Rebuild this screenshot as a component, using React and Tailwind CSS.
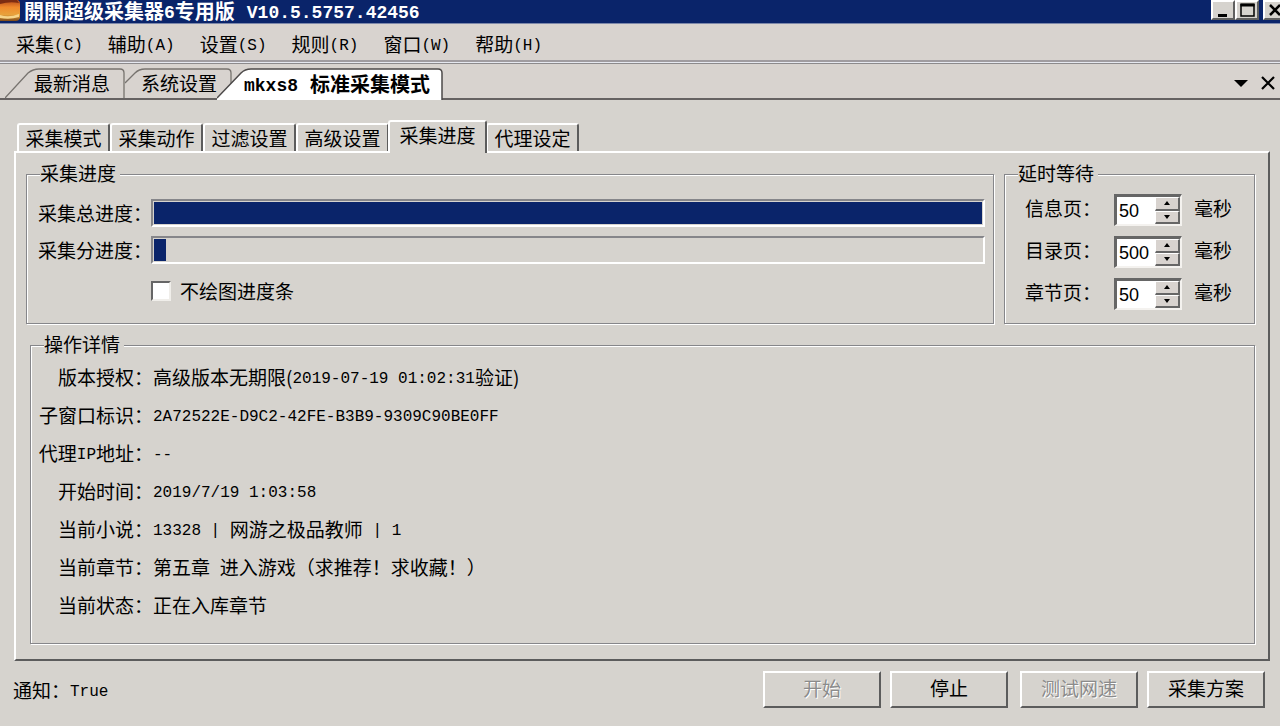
import React, { useState } from "react";

const menus = [
  ["采集", "C"],
  ["辅助", "A"],
  ["设置", "S"],
  ["规则", "R"],
  ["窗口", "W"],
  ["帮助", "H"],
];

const panelTabs = ["采集模式", "采集动作", "过滤设置", "高级设置", "采集进度", "代理设定"];

const delays = [
  { id: "info", label: "信息页：", value: 50 },
  { id: "list", label: "目录页：", value: 500 },
  { id: "chapter", label: "章节页：", value: 50 },
];

const Latin = ({ children }) => (
  <span className="font-['Liberation_Mono',monospace] text-[16px] align-[2px] leading-none">{children}</span>
);

const details = [
  ["版本授权：", <>高级版本无期限(<Latin>2019-07-19 01:02:31</Latin>验证)</>],
  ["子窗口标识：", <Latin>2A72522E-D9C2-42FE-B3B9-9309C90BE0FF</Latin>],
  [<>代理<Latin>IP</Latin>地址：</>, <Latin>--</Latin>],
  ["开始时间：", <Latin>2019/7/19 1:03:58</Latin>],
  ["当前小说：", <><Latin>13328 | </Latin>网游之极品教师<Latin> | 1</Latin></>],
  ["当前章节：", <>第五章<Latin> </Latin>进入游戏（求推荐！求收藏！）</>],
  ["当前状态：", "正在入库章节"],
];

const WindowButton = ({ label, children }) => (
  <button
    aria-label={label}
    className="w-[24px] h-[20px] flex items-center justify-center bg-[#d6d3ce] border-2 border-t-white border-l-white border-r-[#606060] border-b-[#606060]"
  >
    <svg width="18" height="16" viewBox="0 0 18 16" className="shrink-0" fill="none" stroke="#000">
      {children}
    </svg>
  </button>
);

const TitleBar = () => (
  <header className="h-[24px] flex items-start bg-[#0a246a] border-b border-[#7d88aa] overflow-x-clip">
    <svg width="20" height="21" viewBox="0 0 20 21" className="shrink-0">
      <defs>
        <linearGradient id="book" x1="0" y1="0" x2="0" y2="1">
          <stop offset="0" stopColor="#b5481b" />
          <stop offset="0.35" stopColor="#f08a2c" />
          <stop offset="0.7" stopColor="#e8a23c" />
          <stop offset="1" stopColor="#7c4a1a" />
        </linearGradient>
      </defs>
      <path d="M0 0H18Q20 1 20 4V18Q19 21 16 21H0Z" fill="url(#book)" />
      <path d="M0 15Q9 18 19 14V17Q10 20 0 18Z" fill="#f6d489" />
      <path d="M0 0H17L19 3Q10 1 0 4Z" fill="#7d2c12" />
    </svg>
    <h1 className="flex-1 ml-1 text-white text-[20px] leading-[21px] font-bold whitespace-nowrap">
      開開超级采集器<span className="font-['Liberation_Mono',monospace] text-[18px] leading-none align-[1px]">6</span>专用版
      <span className="font-['Liberation_Mono',monospace] text-[18px] leading-none align-[1px] ml-3">V10.5.5757.42456</span>
    </h1>
    <div className="flex -mr-[7px]">
      <WindowButton label="最小化">
        <path d="M4 13.5H13" strokeWidth="3" />
      </WindowButton>
      <WindowButton label="最大化">
        <path d="M3 2.5H16V14H3Z" strokeWidth="1.5" />
        <path d="M2.5 3H16.5" strokeWidth="3" />
      </WindowButton>
      <div className="w-1" />
      <WindowButton label="关闭">
        <path d="M4 3L14 13M14 3L4 13" strokeWidth="2.5" />
      </WindowButton>
    </div>
  </header>
);

const MenuBar = () => (
  <nav className="h-[36px] flex items-center gap-[25px] pt-[4px] pl-[16px] bg-[#d8d3cf]">
    {menus.map(([name, key]) => (
      <button key={key} className="whitespace-nowrap">
        {name}
        <Latin>({key})</Latin>
      </button>
    ))}
  </nav>
);

const DocumentTabs = () => (
  <div className="h-[36px] flex items-end bg-[#d8d3cf] border-b-2 border-[#666262] pl-[5px]">
    <button className="relative w-[120px] h-[30px] pl-[14px] leading-[28px]">
      <svg className="absolute inset-0" width="120" height="30" fill="none" stroke="#77736f" strokeWidth="1.3">
        <path d="M0 30L23 5Q28 1 34 1H115Q119 1 119 5V30" />
      </svg>
      <span className="relative">最新消息</span>
    </button>
    <button className="relative w-[107px] h-[30px] pl-[1px] leading-[28px]">
      <svg className="absolute inset-0" width="107" height="30" fill="none" stroke="#77736f" strokeWidth="1.3">
        <path d="M0 15L10 5Q14 1 20 1H102Q106 1 106 5V30" />
      </svg>
      <span className="relative">系统设置</span>
    </button>
    <button className="relative w-[226px] h-[32px] -ml-[15px] -mb-[2px] pl-[14px] leading-[28px] font-bold whitespace-nowrap">
      <svg className="absolute inset-0" width="226" height="32">
        <path d="M0 32V30L24 5Q28 1 34 1H221Q225 1 225 5V32Z" fill="#fff" />
        <path d="M0 30L24 5Q28 1 34 1H221Q225 1 225 5V32" fill="none" stroke="#4c4949" strokeWidth="1.5" />
      </svg>
      <span className="relative text-[20px]">
        <span className="font-['Liberation_Mono',monospace] text-[18px] leading-none align-[1px] mr-3">mkxs8</span>
        标准采集模式
      </span>
    </button>
    <div className="ml-auto flex items-center gap-3 h-[30px] pr-1">
      <button aria-label="窗口列表">
        <svg width="14" height="8" viewBox="0 0 14 8">
          <path d="M0 1H14L7 8Z" />
        </svg>
      </button>
      <button aria-label="关闭标签">
        <svg width="16" height="14" viewBox="0 0 16 14" fill="none" stroke="#000" strokeWidth="2.2">
          <path d="M2 1L14 13M14 1L2 13" />
        </svg>
      </button>
    </div>
  </div>
);

const Group = ({ title, className, children }) => (
  <fieldset
    className={`min-w-0 border border-[#86868a] shadow-[1px_1px_0_#fff,inset_1px_1px_0_#fff] ${className}`}
  >
    <legend className="h-[24px] leading-[22px] ml-[13px] pr-[4px] bg-[#d6d3ce]">{title}</legend>
    {children}
  </fieldset>
);

const ProgressRow = ({ label, value }) => (
  <div className="flex items-center h-[28px]">
    <span className="w-[124px] pl-[11px] shrink-0 whitespace-nowrap">{label}</span>
    <div
      role="progressbar"
      aria-label={label}
      aria-valuenow={value}
      className="flex-1 h-[28px] p-px border-2 border-t-[#86868a] border-l-[#86868a] border-r-white border-b-white"
    >
      <div className="h-full bg-[#0a246a]" style={{ width: `${value}%` }} />
    </div>
  </div>
);

const SpinButton = ({ up, onClick }) => (
  <button
    aria-label={up ? "增加" : "减少"}
    onClick={onClick}
    className="w-[25px] h-[14px] flex items-center justify-center bg-[#d8d3cf] border-t border-l border-r-2 border-b-2 border-t-white border-l-white border-r-[#666] border-b-[#666]"
  >
    <svg width="6" height="4" viewBox="0 0 6 4">
      {up ? <path d="M0 4L3 0L6 4Z" /> : <path d="M0 0H6L3 4Z" />}
    </svg>
  </button>
);

const DelayRow = ({ id, label, initial }) => {
  const [value, setValue] = useState(initial);

  return (
    <div className="flex items-center h-[32px]">
      <label htmlFor={id} className="w-[89px] pb-[4px] whitespace-nowrap">
        {label}
      </label>
      <div className="w-[68px] h-[32px] flex bg-white border-t-[3px] border-l-[3px] border-r-2 border-b-2 border-t-[#666] border-l-[#666] border-r-[#f4f2ef] border-b-[#f4f2ef]">
        <input
          id={id}
          type="number"
          value={value}
          onChange={(e) => setValue(Number(e.target.value))}
          className="flex-1 min-w-0 pl-[2px] font-['Liberation_Sans',sans-serif] text-[18px] outline-none [appearance:textfield] [&::-webkit-inner-spin-button]:appearance-none"
        />
        <div className="flex flex-col">
          <SpinButton up onClick={() => setValue(value + 1)} />
          <SpinButton onClick={() => setValue(value - 1)} />
        </div>
      </div>
      <span className="ml-[12px] pb-[4px] whitespace-nowrap">毫秒</span>
    </div>
  );
};

const ActionButton = ({ disabled, className = "", children }) => (
  <button
    disabled={disabled}
    className={`w-[118px] h-[37px] pb-[4px] border-2 border-t-white border-l-white border-r-[#5c5c5c] border-b-[#5c5c5c] disabled:text-[#8b8b8b] disabled:[text-shadow:1px_1px_0_#fff] ${className}`}
  >
    {children}
  </button>
);

const App = () => {
  const [tab, setTab] = useState("采集进度");

  return (
    <div className="min-h-screen flex flex-col bg-[#d6d3ce] text-black text-[19px] leading-[24px] font-['Noto_Sans_CJK_SC',sans-serif]">
      <TitleBar />
      <MenuBar />
      <div className="h-[4px] border-t-2 border-b border-t-[#a09ca0] border-b-[#8c8a8c] bg-[#e6e8f0]" />
      <DocumentTabs />

      <main className="flex-1 flex flex-col pt-[20px] pl-[14px] pr-[10px]">
        <div className="flex items-end pl-[3px]">
          {panelTabs.map((name) => (
            <button
              key={name}
              onClick={() => setTab(name)}
              className={
                name === tab
                  ? "relative w-[99px] h-[33px] -mx-px -mb-[2px] pb-[6px] bg-[#d6d3ce] rounded-t-[3px] border-t-2 border-l-2 border-r-2 border-t-white border-l-white border-r-[#5c5c5c]"
                  : "w-[93px] h-[28px] rounded-t-[3px] border-t-2 border-l-2 border-r-2 border-t-white border-l-white border-r-[#5c5c5c]"
              }
            >
              {name}
            </button>
          ))}
        </div>

        <section className="flex-1 flex flex-col gap-[9px] pt-[9px] pl-[10px] pr-[13px] pb-[15px] border-2 border-t-white border-l-white border-r-[#5c5c5c] border-b-[#5c5c5c]">
          <div className="flex gap-[10px]">
            <Group title="采集进度" className="flex-1 pr-[8px] pb-[20px]">
              <div className="flex flex-col gap-[9px] pt-[13px]">
                <ProgressRow label="采集总进度：" value={100} />
                <ProgressRow label="采集分进度：" value={1.4} />
                <label className="flex items-center gap-[9px] h-[24px] mt-[6px] ml-[124px]">
                  <input
                    type="checkbox"
                    className="appearance-none w-[20px] h-[20px] bg-white border-2 border-t-[#666] border-l-[#666] border-r-[#f0eeea] border-b-[#f0eeea] checked:bg-[#0a246a]"
                  />
                  不绘图进度条
                </label>
              </div>
            </Group>
            <Group title="延时等待" className="w-[251px]">
              <div className="flex flex-col gap-[10px] pt-[8px] pl-[20px]">
                {delays.map(({ id, label, value }) => (
                  <DelayRow key={id} id={id} label={label} initial={value} />
                ))}
              </div>
            </Group>
          </div>

          <Group title="操作详情" className="flex-1 ml-[4px]">
            <dl className="pt-px">
              {details.map(([label, value], index) => (
                <div key={index} className="flex h-[38px] leading-[38px] whitespace-nowrap">
                  <dt className="w-[122px] text-right">{label}</dt>
                  <dd>{value}</dd>
                </div>
              ))}
            </dl>
          </Group>
        </section>
      </main>

      <footer className="flex items-center pt-[10px] pb-[18px] pl-[13px] pr-[15px]">
        <span>
          通知：<Latin>True</Latin>
        </span>
        <div className="ml-auto flex gap-[9px]">
          <ActionButton disabled>开始</ActionButton>
          <ActionButton>停止</ActionButton>
          <ActionButton disabled className="ml-[3px]">
            测试网速
          </ActionButton>
          <ActionButton>采集方案</ActionButton>
        </div>
      </footer>
    </div>
  );
};

export default App;
